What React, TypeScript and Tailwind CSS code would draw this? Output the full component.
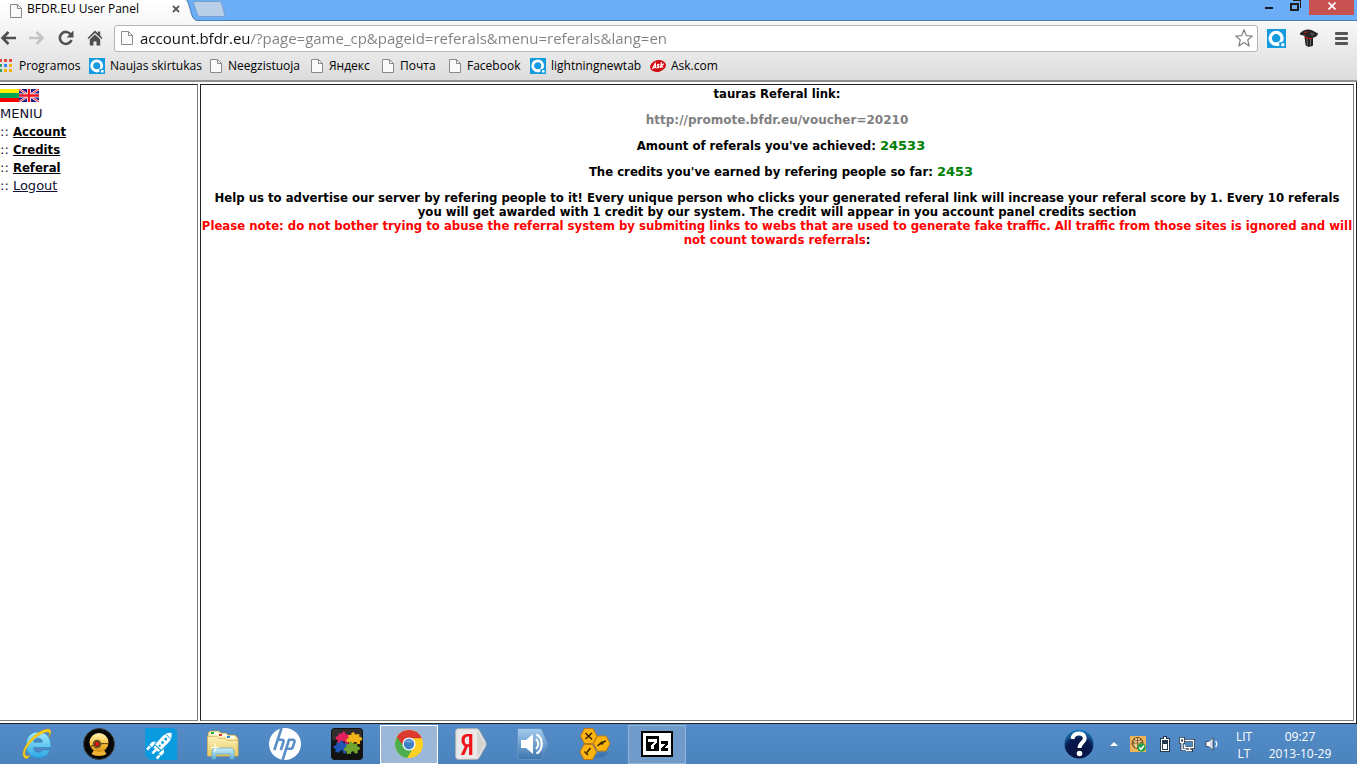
import { useState, type ReactNode } from "react";

/* ---------- small icons ---------- */

function PageIcon() {
  return (
    <svg width="16" height="16" viewBox="0 0 16 16" fill="none" className="shrink-0">
      <path d="M2.5 1.5h7l4 4v9h-11z" fill="#fafafa" stroke="#8a8a8a" />
      <path d="M9.5 1.5v4h4" stroke="#8a8a8a" />
    </svg>
  );
}

function QuickIcon({ size = 16 }: { size?: number }) {
  return (
    <svg width={size} height={size} viewBox="0 0 16 16" className="shrink-0">
      <rect width="16" height="16" fill="#149be0" />
      <circle cx="7.7" cy="7.8" r="5" fill="none" stroke="#fff" strokeWidth="2.8" />
      <path d="M10 11.400L16 10V16H10z" fill="#149be0" />
      <path d="M7.200 14.200c1.500.1 2.500-.1 3.500-.6l-1-2.600c-.8.4-1.600.5-2.500.4z" fill="#fff" />
      <rect x="12" y="12" width="2.600" height="2.600" rx=".6" fill="#fff" />
    </svg>
  );
}

function AskIcon() {
  return (
    <svg width="16" height="16" viewBox="0 0 16 16" className="shrink-0">
      <ellipse cx="8" cy="8" rx="8" ry="5.800" fill="#d20a11" transform="rotate(-14 8 8)" />
      <g fill="none" stroke="#fff" strokeWidth="1.300">
        <path d="M2.500 11l2.600-5.500.9 5M3.500 9.300h2.200" />
        <path d="M9.500 6.600c-2.200-.4-2.600 1-1.300 1.500s.9 2-1.200 1.500" />
        <path d="M11.500 4.200l-1 5.800M13.800 5.800l-2.600 2 1.800 1.600" />
      </g>
    </svg>
  );
}

function AppsIcon() {
  const colors = ["#e8453c", "#e8453c", "#e8453c", "#33a457", "#3a82f0", "#f4b400", "#33a457", "#f4b400", "#f4b400"];
  return (
    <svg width="13" height="14" viewBox="0 0 13 14" className="shrink-0">
      {colors.map((c, i) => (
        <rect key={i} x={(i % 3) * 5 - 1} y={Math.floor(i / 3) * 5} width="3" height="3" fill={c} />
      ))}
    </svg>
  );
}

function HatIcon() {
  return (
    <svg width="20" height="20" viewBox="0 0 20 20">
      <path d="M5.500 8l1 9c1.500 2.300 5.500 2.300 7.500.3L14 8z" fill="#1b1b1b" />
      <path d="M8 11l.5 6.500M11.500 11v6.500" stroke="#666" strokeWidth="1.200" />
      <path d="M.8 5.500C4 1.500 9 .8 13 2.200l6 3.300c-.5 3-3.500 4.200-6.500 4.200C9 9.700 7.500 7.500 1.500 7z" fill="#242424" />
      <path d="M5.500 5l3-1.500M5.500 8.500c2.500 2.300 5.500 2.600 8 1.800" fill="none" stroke="#c22" strokeWidth="1.100" />
      <path d="M11 4.500l5 1.500-3 2z" fill="#555" />
    </svg>
  );
}

function LithuaniaFlag() {
  return (
    <svg width="19" height="13" viewBox="0 0 19 13" shapeRendering="crispEdges">
      <rect width="19" height="13" fill="#fff200" />
      <rect y="4" width="19" height="5" fill="#00a651" />
      <rect y="9" width="19" height="4" fill="#ff0000" />
    </svg>
  );
}

function UkFlag() {
  return (
    <svg width="20" height="13" viewBox="0 0 20 13">
      <rect width="20" height="13" fill="#1c1c84" />
      <path d="M0 0l20 13M20 0L0 13" stroke="#fff" strokeWidth="2.200" />
      <path d="M0 0l20 13M20 0L0 13" stroke="#f0242c" strokeWidth="1" />
      <path d="M10 0v13M0 6.500h20" stroke="#fff" strokeWidth="4" />
      <path d="M10 0v13M0 6.500h20" stroke="#f41420" strokeWidth="2.400" />
    </svg>
  );
}

/* ---------- taskbar icons ---------- */

function ExplorerIcon() {
  return (
    <svg width="32" height="32" viewBox="0 0 32 32">
      <defs>
        <linearGradient id="ie" x1="0" y1="0" x2="0" y2="1">
          <stop offset="0" stopColor="#a5ecff" />
          <stop offset="1" stopColor="#29a6e4" />
        </linearGradient>
      </defs>
      <path
        d="M17 4C9 4 5 10 5 17c0 8 5 13 12.500 13 6 0 10-3 11.500-8h-7.500c-1 1.600-2.300 2.300-4 2.300-3 0-4.700-1.800-4.900-4.800H30C30.300 10 26 4 17 4zm-4.300 10.200c.5-2.600 2-4 4.500-4s4 1.400 4.200 4z"
        fill="url(#ie)"
        stroke="#2d85c4"
        strokeWidth=".6"
      />
      <path
        d="M4.500 30.500C-1 28 3 17 12 9 20 1.500 28.500-.8 29.600 2.500c.6 1.800-.3 4.200-1.800 6.500 1-2.500 1-4.200-.2-4.800C24.500 2.800 17 7 11.500 12.500 5 19 2 26.500 5.200 27.800c1 .4 2.300.2 4-.6-1.700 2.300-3.400 3.700-4.700 3.300z"
        fill="#fdd017"
        stroke="#c99a1c"
        strokeWidth=".5"
      />
    </svg>
  );
}

function WebcamIcon() {
  return (
    <svg width="32" height="32" viewBox="0 0 32 32">
      <defs>
        <linearGradient id="gold" x1="0" y1="0" x2="0" y2="1">
          <stop offset="0" stopColor="#fff3b0" />
          <stop offset=".6" stopColor="#fbc23a" />
          <stop offset="1" stopColor="#d08a14" />
        </linearGradient>
      </defs>
      <circle cx="16" cy="16" r="15.500" fill="#070707" stroke="#404040" />
      <path d="M11 22l-2.500 4c3.500 2.500 11.500 2.500 15 0L21 22z" fill="#f2b32e" />
      <circle cx="16" cy="14.500" r="9.500" fill="url(#gold)" />
      <path d="M7 19c4-3 14-4 19-3" fill="none" stroke="#442a08" strokeWidth="1" />
      <circle cx="14" cy="16" r="4.300" fill="#332211" />
      <circle cx="14" cy="16" r="3.400" fill="none" stroke="#c18a36" strokeWidth=".8" />
      <circle cx="14" cy="16" r="2.100" fill="#f01818" />
    </svg>
  );
}

function RocketIcon() {
  return (
    <svg width="32" height="32" viewBox="0 0 32 32">
      <path d="M0 0h29l3 3v29H5l-5-5z" fill="#0a9ade" />
      <g transform="translate(2.500 2.500) scale(.85) rotate(43 16 16)" fill="#fff">
        <path d="M16-2c4 3 5 7 5 11v12H11V9c0-4 1-8 5-11z" />
        <path d="M10 13v5l-3.500 3v5h4zM22 13v5l3.500 3v5h-4z" />
        <path d="M12 22h8v3h-8zM14.500 22h3v9h-3zM6.800 27h3v5h-3zM22.300 27h3v5h-3z" />
        <g fill="#0a9ade">
          <circle cx="16" cy="8" r="1.700" />
          <circle cx="16" cy="13.500" r="1.700" />
          <circle cx="16" cy="18.500" r="1.300" />
          <path d="M12.500 3.300h7v.9h-7zM10 13h.8v8H10zM21.200 13h.8v8h-.8z" />
        </g>
      </g>
    </svg>
  );
}

function FoldersIcon() {
  return (
    <svg width="34" height="32" viewBox="0 0 34 32">
      <defs>
        <linearGradient id="folder" x1="0" y1="0" x2="0" y2="1">
          <stop offset="0" stopColor="#fdf3b8" />
          <stop offset="1" stopColor="#e5c860" />
        </linearGradient>
        <linearGradient id="stand" x1="0" y1="0" x2="0" y2="1">
          <stop offset="0" stopColor="#c9eef9" />
          <stop offset="1" stopColor="#6cb5dc" />
        </linearGradient>
      </defs>
      <path d="M2 28V5l2-2h9l2 2h5l2 2h7l3 3v18z" fill="url(#folder)" stroke="#b3974a" strokeWidth=".7" />
      <path d="M4.500 4h8v2.500h-8zM12.500 6h8v2.500h-8zM20.500 8h8v2.500h-8z" fill="#fff" />
      <path d="M5 4h3v2H5z" fill="#26ae3c" />
      <path d="M13 6h3v2h-3z" fill="#d9362b" />
      <path d="M21 8h3v2h-3z" fill="#2e86d4" />
      <path d="M1.500 28V8.500H11l2 2h6l2 2h11V28z" fill="url(#folder)" stroke="#d1b25a" strokeWidth=".7" />
      <path d="M6 31V22l2-2h18l2 2v9h-4v-5H10v5z" fill="url(#stand)" stroke="#5ca4c6" strokeWidth=".7" />
      <path d="M9 15v9M5 19.500h8" stroke="#fff" strokeWidth="1" />
    </svg>
  );
}

function HpIcon() {
  return (
    <svg width="32" height="32" viewBox="0 0 32 32">
      <circle cx="16" cy="16" r="16" fill="#fff" />
      <g fill="none" stroke="#5a8fc6" strokeWidth="2.600">
        <path d="M12.600 0L5.300 22M9 11.800h3.700c1.600 0 2.200.8 1.700 2.300L11.800 22" />
        <path d="M20.300 11L13.600 32M19.500 11.800h4.300c1.500 0 2.100.8 1.600 2.300l-1.500 4.700c-.5 1.500-1.300 2-2.700 2h-3.900" />
      </g>
    </svg>
  );
}

function PuzzleIcon() {
  const piece = "M0 2h3c-1-3 4-3 3 0h4v3c3-1 3 4 0 3v3H7c1-3-4-3-3 0H0V8c-3 1-3-4 0-3z";
  return (
    <svg width="32" height="32" viewBox="0 0 32 32">
      <rect width="32" height="32" rx="4" fill="#131313" />
      <path d="M3 1h26c1 0 2 1 2 3v8C20 10 10 10 1 13V4c0-2 1-3 2-3z" fill="#2e2e2e" />
      <path d={piece} fill="#e2215c" transform="translate(8 3) rotate(8) scale(1.100)" />
      <path d={piece} fill="#f2b416" transform="translate(17 5) rotate(-6) scale(1.100)" />
      <path d={piece} fill="#1f56b4" transform="translate(6 12) rotate(8) scale(1.100)" />
      <path d={piece} fill="#6fa52c" transform="translate(15 14) rotate(-4) scale(1.100)" />
    </svg>
  );
}

function ChromeIcon() {
  return (
    <svg width="30" height="30" viewBox="0 0 30 30">
      <circle cx="15" cy="15" r="14" fill="#fdd022" />
      <path d="M15 15L2.900 8A14 14 0 0 0 13.200 28.900L20 17.500z" fill="#4bae4f" />
      <path d="M2.900 8A14 14 0 0 1 27.800 9.300H15L9.500 17z" fill="#dc3a30" />
      <circle cx="15" cy="15" r="6.600" fill="#f4f6f8" />
      <circle cx="15" cy="15" r="5.200" fill="#3f7fc8" />
      <path d="M10.500 13.500a5 5 0 0 1 9 0z" fill="#6ba3dd" />
    </svg>
  );
}

function YandexIcon() {
  return (
    <svg width="32" height="32" viewBox="0 0 32 32">
      <path d="M3 .7h18c1.500 0 2.200.3 3 1.300l6.500 11.500c.8 1.600.8 3.400 0 5L24 30c-.8 1-1.500 1.300-3 1.300H3A2.300 2.300 0 0 1 .7 29V3A2.300 2.300 0 0 1 3 .7z" fill="#e9e9e9" stroke="#b4b4b4" />
      <path d="M22 2v28l8-14z" fill="#d3d3d3" />
      <path d="M17.300 6v21h-3.200v-8.200h-1.300L9.300 27H5.800l4-8.800C7.600 17.200 6.500 15 6.500 12.300 6.500 8.200 8.800 6 12.600 6zm-3.200 2.600h-1.500c-1.900 0-2.900 1.300-2.900 3.800s1 3.900 2.900 3.900h1.500z" fill="#f2141a" />
    </svg>
  );
}

function VolumeTileIcon() {
  return (
    <svg width="32" height="32" viewBox="0 0 32 32">
      <defs>
        <linearGradient id="vol" x1="0" y1="0" x2="0" y2="1">
          <stop offset="0" stopColor="#a5cbed" />
          <stop offset="1" stopColor="#3d76b0" />
        </linearGradient>
      </defs>
      <path d="M2 .5h20c1.500 0 2 .5 3 1.500l6 14-6 14c-1 1-1.500 1.500-3 1.500H2C1 31.500.5 31 .5 30V2C.5 1 1 .5 2 .5z" fill="url(#vol)" stroke="#6393c4" />
      <path d="M4 12h5l7-6v20l-7-6H4z" fill="#fff" />
      <path d="M19 11c3 3 3 7 0 10M19.500 6.500c7 3.500 7 15.500 0 19" fill="none" stroke="#fff" strokeWidth="2.200" />
    </svg>
  );
}

function HoneycombIcon() {
  const hex = "M4 0h8.500L16.500 7.500 12.500 15H4L0 7.500z";
  return (
    <svg width="32" height="32" viewBox="0 0 32 32">
      <path d="M14 30l6-5 9-1-3 5z" fill="#33689c" opacity=".5" />
      <g fill="#fbb410" stroke="#c27804" strokeWidth=".9">
        <path d={hex} transform="translate(1.500 .5)" />
        <path d={hex} transform="translate(14.500 8)" />
        <path d={hex} transform="translate(1 16.500)" />
      </g>
      <g stroke="#3a2503" strokeWidth="1.500" fill="none">
        <path d="M6.500 5l6.500 6.500M13 5l-6.500 6" />
        <path d="M18.500 18l4-3.500 4.500-1.500M21.500 16l3-.5" />
        <path d="M11.500 20l-3.500 4.500M5.500 23.500l3.500 3.500" />
      </g>
    </svg>
  );
}

function SevenZipIcon() {
  return (
    <svg width="32" height="26" viewBox="0 0 32 26" shapeRendering="crispEdges">
      <rect width="32" height="26" fill="#000" />
      <rect x="2" y="2" width="28" height="22" fill="#fff" />
      <rect x="5" y="5" width="13" height="15" fill="#000" />
      <path d="M7 8h9v3l-3 3v4h-3v-4l3-3H7z" fill="#fff" />
      <path d="M20 10h7v3l-4 4h4v3h-7v-3l4-4h-4z" fill="#000" />
    </svg>
  );
}

function HelpIcon() {
  return (
    <svg width="30" height="30" viewBox="0 0 30 30">
      <defs>
        <radialGradient id="help" cx=".5" cy=".75" r=".75">
          <stop offset="0" stopColor="#07123f" />
          <stop offset=".6" stopColor="#07194e" />
          <stop offset="1" stopColor="#1e86cc" />
        </radialGradient>
      </defs>
      <circle cx="15" cy="15" r="14.500" fill="url(#help)" />
      <path d="M8.500 10C9 6 11.500 4.500 15 4.500c3.500 0 5.800 1.800 5.800 4.800 0 4.200-5.300 4.200-5.300 9.700" fill="none" stroke="#fff" strokeWidth="4" />
      <circle cx="15.500" cy="24.500" r="2.800" fill="#fff" />
    </svg>
  );
}

function GlobeTrayIcon() {
  return (
    <svg width="16" height="16" viewBox="0 0 16 16">
      <rect width="16" height="16" fill="#efb45a" />
      <circle cx="7.500" cy="7" r="5.500" fill="#f9d696" stroke="#6b4a1c" />
      <path d="M2 7h11M7.500 1.500v11M3.500 3.500c2.500 1.500 5.500 1.500 8 0M4.700 2.500c-1.500 3-1.500 6 0 9M10.300 2.500c1.500 3 1.500 6 0 9" fill="none" stroke="#6b4a1c" strokeWidth=".8" />
      <circle cx="11.500" cy="11.500" r="4.300" fill="#21a045" />
      <path d="M9.300 11.500l1.700 1.800 3-3.500" fill="none" stroke="#fff" strokeWidth="1.500" />
    </svg>
  );
}

function BatteryIcon() {
  return (
    <svg width="10" height="16" viewBox="0 0 10 16" shapeRendering="crispEdges">
      <path d="M3 0h4v2h3v14H0V2h3z" fill="#26384c" />
      <path d="M4 1h2v2h3v12H1V3h3z" fill="#fff" />
      <path d="M2 4h6v10H2z" fill="#26384c" />
      <path d="M3 8h4v5H3z" fill="#fff" />
    </svg>
  );
}

function NetworkIcon() {
  return (
    <svg width="16" height="15" viewBox="0 0 16 15" fill="none">
      <path d="M1.500 1.500h3v4h-3zM3 5.500v7h4M6 3.500h9v7H6M8 13.500h6M10.500 10.500v3" stroke="#26384c" strokeWidth="3" />
      <path d="M1.500 1.500h3v4h-3zM3 5.500v7h4M6 3.500h8.500v7h-9v-3M7 13.500h6M10.500 10.500v3" stroke="#fff" strokeWidth="1.300" />
    </svg>
  );
}

function SpeakerIcon() {
  return (
    <svg width="14" height="14" viewBox="0 0 14 14">
      <path d="M1 4.500h2.500L8 .8v12.400L3.500 9.500H1z" fill="#fff" stroke="#26384c" strokeWidth=".8" />
      <path d="M6 3v8" stroke="#9fb4ca" />
      <path d="M10.500 4c1.600 1.800 1.600 4.200 0 6" stroke="#fff" strokeWidth="1.300" fill="none" />
    </svg>
  );
}

/* ---------- data ---------- */

const bookmarks: { label: string; icon: ReactNode; className: string }[] = [
  { label: "Naujas skirtukas", icon: <QuickIcon />, className: "w-[119px] gap-[5px]" },
  { label: "Neegzistuoja", icon: <PageIcon />, className: "w-[101px] gap-1" },
  { label: "Яндекс", icon: <PageIcon />, className: "w-[71px] gap-1" },
  { label: "Почта", icon: <PageIcon />, className: "w-[67px] gap-1" },
  { label: "Facebook", icon: <PageIcon />, className: "w-[83px] gap-1" },
  { label: "lightningnewtab", icon: <QuickIcon />, className: "w-[120px] gap-[5px]" },
  { label: "Ask.com", icon: <AskIcon />, className: "gap-[5px]" },
];

const menuLinks = [
  { label: "Account", bold: true },
  { label: "Credits", bold: true },
  { label: "Referal", bold: true },
  { label: "Logout", bold: false },
];

const taskbarApps: { name: string; icon: ReactNode; state?: "active" | "open" }[] = [
  { name: "Internet Explorer", icon: <ExplorerIcon /> },
  { name: "Webcam", icon: <WebcamIcon /> },
  { name: "Rocket", icon: <RocketIcon /> },
  { name: "File Explorer", icon: <FoldersIcon /> },
  { name: "HP", icon: <HpIcon /> },
  { name: "Puzzle", icon: <PuzzleIcon /> },
  { name: "Chrome", icon: <ChromeIcon />, state: "active" },
  { name: "Yandex", icon: <YandexIcon /> },
  { name: "Volume", icon: <VolumeTileIcon /> },
  { name: "Tools", icon: <HoneycombIcon /> },
  { name: "7-Zip", icon: <SevenZipIcon />, state: "open" },
];

/* ---------- browser ---------- */

function TabStrip() {
  return (
    <div className="flex h-[21px] items-stretch border-b border-[#4c7fb8] bg-[#6badf6]">
      <div className="-mb-px flex w-[185px] items-center bg-gradient-to-b from-white to-[#f8f8f8] pl-2 text-[12px]">
        <PageIcon />
        <span className="-mt-1 ml-[3px] flex-1 whitespace-nowrap">BFDR.EU User Panel</span>
        <button aria-label="Close tab" className="mr-px flex h-4 w-4 items-center justify-center pb-[3px]">
          <svg width="8" height="8" viewBox="0 0 8 8" stroke="#5c5c5c" strokeWidth="1.800">
            <path d="M1 1l6 6M7 1L1 7" />
          </svg>
        </button>
      </div>
      <button aria-label="New tab" className="-mb-px">
        <svg width="42" height="21" viewBox="0 0 42 21">
          <path d="M0 0h1.500c1.500 1.500 2.500 5 4 10.500S8 19.500 12 20.500v.5H0z" fill="#f9f9f9" />
          <path d="M1.500 0c1.500 1.500 2.500 5 4 10.500S8 19.500 12 20.500" fill="none" stroke="#4576ad" />
          <path d="M10 1.500h24.500c1 0 1.500.5 2 1.500l3 11c.3 1.500-.3 2.500-1.500 2.500H15.500c-1.500 0-2.500-.5-3-2L8.700 3.500c-.4-1.200 0-2 1.300-2z" fill="#b9cfe8" stroke="#7a9fca" />
        </svg>
      </button>
      <div className="ml-auto flex items-start">
        <button aria-label="Minimize" className="flex h-4 w-6 items-start justify-center pt-[7px]">
          <span className="h-[2px] w-2 bg-[#1d1d1d]" />
        </button>
        <button aria-label="Restore" className="flex h-4 w-7 items-start justify-center">
          <svg width="11" height="11" viewBox="0 0 11 11" fill="none" stroke="#1d1d1d" shapeRendering="crispEdges">
            <path d="M1 3.500h7v6H1z" strokeWidth="2" />
            <path d="M3 .5h7.500v7" />
          </svg>
        </button>
        <button aria-label="Close" className="mr-[3px] flex h-[15px] w-[45px] items-center justify-center bg-[#c75050] pb-[3px]">
          <svg width="8" height="8" viewBox="0 0 8 8" stroke="#fff" strokeWidth="1.700">
            <path d="M.5 .5l7 7M7.500 .5l-7 7" />
          </svg>
        </button>
      </div>
    </div>
  );
}

function Toolbar() {
  const [url, setUrl] = useState("account.bfdr.eu/?page=game_cp&pageid=referals&menu=referals&lang=en");

  return (
    <div className="flex h-[34px] items-center">
      <div className="flex w-[114px] items-center gap-[13px]">
        <button aria-label="Back">
          <svg width="16" height="16" viewBox="0 0 16 16" fill="none" stroke="#4f4f4f" strokeWidth="2.600">
            <path d="M16 8H3M8.500 2L2.500 8l6 6" />
          </svg>
        </button>
        <button aria-label="Forward">
          <svg width="16" height="16" viewBox="0 0 16 16" fill="none" stroke="#c3c3c3" strokeWidth="2.600">
            <path d="M0 8h13M7.500 2l6 6-6 6" />
          </svg>
        </button>
        <button aria-label="Reload">
          <svg width="16" height="16" viewBox="0 0 16 16" fill="none">
            <path d="M12.800 4.500A6 6 0 1 0 13.500 10" stroke="#4f4f4f" strokeWidth="2.600" />
            <path d="M15.500 .5v7h-7z" fill="#4f4f4f" />
          </svg>
        </button>
        <button aria-label="Home">
          <svg width="16" height="16" viewBox="0 0 16 16" fill="#4f4f4f">
            <path d="M8 .5L.5 8l1 1L8 3l6.500 6 1-1-2.300-2.400V1.500h-2.400v1.800z" />
            <path d="M8 4.500L2.800 9.300V15.500h3.700v-4h3v4h3.700V9.300z" />
          </svg>
        </button>
      </div>
      <div className="flex h-[27px] flex-1 items-center rounded-[3px] border border-[#b4b4b4] bg-white pr-1 pl-1">
        <PageIcon />
        <input
          aria-label="Address"
          value={url}
          onChange={(e) => setUrl(e.target.value)}
          className="ml-[5px] h-6 min-w-0 flex-1 bg-[linear-gradient(90deg,#111_109px,#808080_109px)] bg-clip-text text-[15px] text-transparent outline-none"
        />
        <button aria-label="Bookmark this page">
          <svg width="18" height="18" viewBox="0 0 18 18" fill="#fff" stroke="#7d7d7d" strokeWidth="1.200" strokeLinejoin="round">
            <path d="M9 .8l2.300 5.800 6 .4-4.600 3.900 1.500 6L9 13.600l-5.200 3.300 1.500-6L.7 7l6-.4z" />
          </svg>
        </button>
      </div>
      <div className="flex items-center pr-[9px] pl-[9px]">
        <button aria-label="Quick search">
          <QuickIcon size={19} />
        </button>
        <button aria-label="Magic hat" className="ml-[13px]">
          <HatIcon />
        </button>
        <button aria-label="Menu" className="ml-4 flex w-[13px] flex-col gap-[2px]">
          <span className="h-[3px] rounded-[1px] bg-[#555]" />
          <span className="h-[3px] rounded-[1px] bg-[#555]" />
          <span className="h-[3px] rounded-[1px] bg-[#555]" />
        </button>
      </div>
    </div>
  );
}

function BookmarksBar() {
  return (
    <nav className="flex h-[25px] items-center pb-[3px] text-[12px] whitespace-nowrap text-black">
      <a href="#apps" className="flex w-[89px] items-center gap-[6px]">
        <AppsIcon />
        Programos
      </a>
      {bookmarks.map((b) => (
        <a key={b.label} href="#bookmark" className={`flex items-center ${b.className}`}>
          {b.icon}
          {b.label}
        </a>
      ))}
    </nav>
  );
}

/* ---------- page ---------- */

function Sidebar() {
  return (
    <aside className="w-[198px] shrink-0 border-t border-r border-b border-t-[#222] border-r-[#808080] border-b-[#808080] pt-1 text-[13px] leading-[18px] text-[#101030]">
      <div className="flex h-4 items-start">
        <a href="#lt" aria-label="Lietuviškai">
          <LithuaniaFlag />
        </a>
        <a href="#en" aria-label="English">
          <UkFlag />
        </a>
      </div>
      <div>MENIU</div>
      {menuLinks.map((link) => (
        <div key={link.label}>
          ::{" "}
          <a
            href="#menu"
            className={link.bold ? "font-['DejaVu_Sans_Condensed',sans-serif] font-bold text-black underline" : "underline"}
          >
            {link.label}
          </a>
        </div>
      ))}
    </aside>
  );
}

function Count({ children }: { children: ReactNode }) {
  return <span className="font-['DejaVu_Sans',sans-serif] text-[#008000]">{children}</span>;
}

function ReferralPanel() {
  return (
    <main className="flex-1 border border-t-[#222] border-r-[#808080] border-b-[#808080] border-l-[#222] pt-[2px] text-center font-['DejaVu_Sans_Condensed','DejaVu_Sans',sans-serif] text-[13px] leading-[14px] font-bold text-black">
      <p className="mb-3">tauras Referal link:</p>
      <p className="mb-3 font-['DejaVu_Sans',sans-serif] text-[12px] text-[#808080]">
        http://promote.bfdr.eu/voucher=20210
      </p>
      <p className="mb-3 pl-2">
        Amount of referals you've achieved: <Count>24533</Count>
      </p>
      <p className="mb-3 pl-2">
        The credits you've earned by refering people so far: <Count>2453</Count>
      </p>
      <p>
        Help us to advertise our server by refering people to it! Every unique person who clicks your generated referal
        link will increase your referal score by 1. Every 10 referals
        <br />
        you will get awarded with 1 credit by our system. The credit will appear in you account panel credits section
      </p>
      <p>
        <span className="text-[#f00]">
          Please note: do not bother trying to abuse the referral system by submiting links to webs that are used to
          generate fake traffic. All traffic from those sites is ignored and will
          <br />
          not count towards referrals
        </span>
        :
      </p>
    </main>
  );
}

/* ---------- taskbar ---------- */

function Taskbar() {
  return (
    <footer className="flex h-10 items-center justify-between bg-gradient-to-b from-[#538cc8] to-[#4b83bd] pr-6 pl-2 text-white">
      <div className="flex gap-1">
        {taskbarApps.map((app) => (
          <button
            key={app.name}
            aria-label={app.name}
            className={`flex h-[39px] w-[58px] items-center justify-center border ${
              app.state === "active"
                ? "border-white bg-[#9bb8d8]"
                : app.state === "open"
                  ? "border-[#94b4d8] bg-[#6f9bcb]"
                  : "border-transparent"
            }`}
          >
            {app.icon}
          </button>
        ))}
      </div>
      <div className="flex items-center text-[12px]">
        <button aria-label="Help">
          <HelpIcon />
        </button>
        <button aria-label="Show hidden icons" className="ml-4">
          <svg width="8" height="4" viewBox="0 0 8 4" fill="#fff">
            <path d="M4 0l4 4H0z" />
          </svg>
        </button>
        <button aria-label="Network guard" className="ml-3">
          <GlobeTrayIcon />
        </button>
        <button aria-label="Battery" className="ml-[14px]">
          <BatteryIcon />
        </button>
        <button aria-label="Network" className="ml-[9px]">
          <NetworkIcon />
        </button>
        <button aria-label="Sound" className="ml-[10px]">
          <SpeakerIcon />
        </button>
        <button className="ml-[10px] w-[30px] pt-px text-center leading-[17px]">
          LIT
          <br />
          LT
        </button>
        <button className="ml-2 w-[66px] pt-px text-center leading-[17px] whitespace-nowrap">
          09:27
          <br />
          2013-10-29
        </button>
      </div>
    </footer>
  );
}

export default function App() {
  return (
    <div className="flex min-h-screen flex-col bg-white pr-[9px] pb-1 font-['Open_Sans','Noto_Sans',sans-serif]">
      <TabStrip />
      <header className="border-b-2 border-[#909090] bg-gradient-to-b from-[#f8f8f8] to-[#dcdcdc]">
        <Toolbar />
        <BookmarksBar />
      </header>
      <div className="flex flex-1 gap-[2px] border-r border-b border-[#222] pt-[2px] pr-[2px] pb-[2px] font-['DejaVu_Sans',sans-serif]">
        <Sidebar />
        <ReferralPanel />
      </div>
      <Taskbar />
    </div>
  );
}
